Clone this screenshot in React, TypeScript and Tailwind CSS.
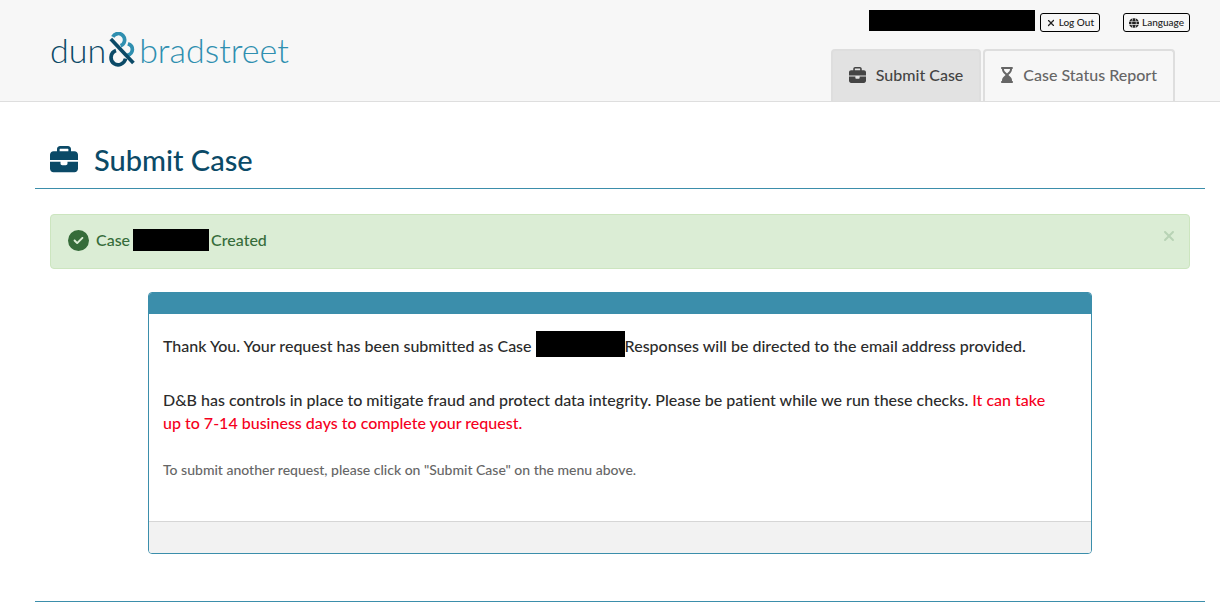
import type { ReactNode } from "react";
import {
  FaBriefcase,
  FaCircleCheck,
  FaGlobe,
  FaHourglassEnd,
  FaXmark,
} from "react-icons/fa6";

function Logo() {
  return (
    <a
      href="#"
      aria-label="dun & bradstreet"
      className="flex items-center text-[34px] leading-9 font-light"
    >
      <span className="text-[#0b4a67]">dun</span>
      <svg
        width="26"
        height="36"
        viewBox="0 0 26 36"
        fill="none"
        strokeWidth="3.7"
        className="mr-1 ml-[3px]"
      >
        <path d="M3.8 4.8A6.3 6.3 0 1 1 11.6 13.7" stroke="#2f8fb0" />
        <path d="M18.9 11.8C25.3 14 24.6 21.6 18.4 23.4" stroke="#2f8fb0" />
        <path
          d="M7 18.6C1 20.6 0.7 28.6 4.9 31.4C9.6 34.8 15.4 31.6 16.6 26.6"
          stroke="#0b4a67"
        />
        <path d="M1.8 7L24.4 31" stroke="#0b4a67" />
      </svg>
      <span className="text-[#2f8fb0]">bradstreet</span>
    </a>
  );
}

function SmallButton({ children }: { children: ReactNode }) {
  return (
    <button
      type="button"
      className="flex h-[19px] items-center gap-[3px] rounded-[3px] border border-black px-[5px] text-[10px] font-medium text-[#222]"
    >
      {children}
    </button>
  );
}

function Header() {
  return (
    <header className="flex justify-between border-b border-[#dedede] bg-[#f7f7f7] pr-[30px] pl-[50px]">
      <div className="pt-8">
        <Logo />
      </div>
      <div className="flex flex-col items-end pt-2.5">
        <div className="flex items-start">
          <span className="h-[21px] w-[166px] bg-black" />
          <div className="ml-[5px] flex gap-[23px] pt-[3px]">
            <SmallButton>
              <FaXmark className="size-2.5" />
              Log Out
            </SmallButton>
            <SmallButton>
              <FaGlobe className="size-2.5" />
              Language
            </SmallButton>
          </div>
        </div>
        <nav className="mt-[17px] mr-[15px] flex gap-0.5 text-base font-medium">
          <a
            href="#"
            className="flex h-[52px] items-center gap-2.5 rounded-t border-2 border-b-0 border-[#dedede] bg-[#e2e2e2] px-4 pb-0.5 text-[#444]"
          >
            <FaBriefcase className="size-[17px]" />
            Submit Case
          </a>
          <a
            href="#"
            className="flex h-[52px] items-center gap-2.5 rounded-t border-2 border-b-0 border-[#dedede] px-4 pb-0.5 text-[#666]"
          >
            <FaHourglassEnd className="h-4 w-3" />
            Case Status Report
          </a>
        </nav>
      </div>
    </header>
  );
}

export default function App() {
  return (
    <div className="min-h-screen bg-white font-['Lato','Open_Sans',sans-serif] text-[#2b2b2b] [font-variant-ligatures:none]">
      <Header />

      <main className="pr-[15px] pb-3 pl-[35px]">
        <h1 className="flex items-center gap-4 border-b border-[#3b8eab] px-[15px] pt-10 pb-2.5 text-[29px] leading-9 font-medium text-[#0b4a67]">
          <FaBriefcase className="size-7" />
          Submit Case
        </h1>

        <div
          role="alert"
          className="mx-[15px] mt-[25px] flex h-[55px] items-center rounded border border-[#cce5bf] bg-[#dbedd5] px-[17px] pb-[3px] text-base font-medium text-[#366c3a]"
        >
          <FaCircleCheck className="mr-[7px] size-[21px]" />
          Case
          <span className="mr-0.5 ml-[3px] h-[22px] w-[76px] bg-black" />
          Created
          <button
            type="button"
            aria-label="Close"
            className="mr-[-5px] mb-2 ml-auto text-[#b8d3b5]"
          >
            <FaXmark className="size-4" />
          </button>
        </div>

        <section className="mx-[113px] mt-[23px] overflow-hidden rounded border border-[#3b8eab]">
          <div className="h-[21px] bg-[#3b8eab]" />
          <div className="px-3.5 pt-[17px] pb-10 text-base leading-[23px] font-medium">
            <p className="leading-[29px]">
              Thank You. Your request has been submitted as Case{" "}
              <span className="inline-block h-[26px] w-[89px] bg-black align-top" />
              Responses will be directed to the email address provided.
            </p>
            <p className="mt-7 pr-5">
              D&amp;B has controls in place to mitigate fraud and protect data
              integrity. Please be patient while we run these checks.{" "}
              <span className="text-[#f5001d]">
                It can take up to 7-14 business days to complete your request.
              </span>
            </p>
            <p className="mt-6 text-sm leading-[23px] text-[#666]">
              To submit another request, please click on "Submit Case" on the
              menu above.
            </p>
          </div>
          <div className="h-8 border-t border-[#d6d6d6] bg-[#f2f2f2]" />
        </section>

        <hr className="mt-[47px] border-[#3b8eab]" />
      </main>
    </div>
  );
}
